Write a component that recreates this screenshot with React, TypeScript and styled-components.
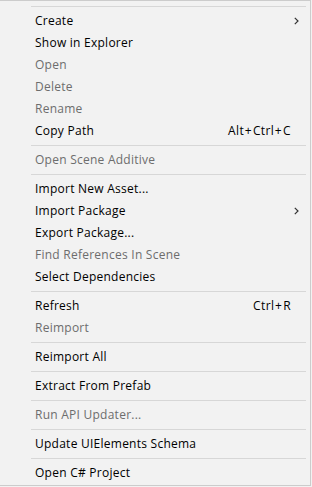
import React from "react";
import styled, { createGlobalStyle } from "styled-components";

const Global = createGlobalStyle`
  html, body { margin: 0; padding: 0; background: #f2f2f2; }
  body { font-family: "Open Sans", "Noto Sans", "Liberation Sans", sans-serif; }
`;

const Menu = styled.div`
  box-sizing: border-box;
  width: 311px;
  height: 486px;
  background: #f2f2f2;
  border-top: 1px solid #cccccc;
  border-right: 1px solid #cccccc;
  border-bottom: 1px solid #cccccc;
  padding-top: 2px;
  display: flex;
  flex-direction: column;
  font-family: "Open Sans", "Noto Sans", "Liberation Sans", sans-serif;
  font-size: 12px;
  letter-spacing: 0.25px;
  color: #000;
`;

const Row = styled.div<{ $disabled?: boolean }>`
  height: 22px;
  line-height: 22px;
  padding-left: 35px;
  padding-right: 19px;
  display: flex;
  align-items: center;
  color: ${(p) => (p.$disabled ? "#6d6d6d" : "#000000")};
  white-space: nowrap;
`;

const Label = styled.span`
  flex: 1;
`;

const Shortcut = styled.span`
  color: #000;
  display: flex;
  letter-spacing: 0.4px;
`;

const Plus = styled.span`
  margin: 0 1px 0 0.5px;
`;

const Arrow = styled.svg`
  width: 5px;
  height: 8px;
  margin-right: -8px;
`;

const Separator = styled.div`
  height: 7px;
  display: flex;
  align-items: center;
  padding-left: 31px;
  padding-right: 4px;
  &::after {
    content: "";
    flex: 1;
    height: 1px;
    background: #d7d7d7;
  }
`;

type Item =
  | { sep: true }
  | { label: string; disabled?: boolean; shortcut?: string[]; sub?: boolean };

const items: Item[] = [
  { sep: true },
  { label: "Create", sub: true },
  { label: "Show in Explorer" },
  { label: "Open", disabled: true },
  { label: "Delete", disabled: true },
  { label: "Rename", disabled: true },
  { label: "Copy Path", shortcut: ["Alt", "Ctrl", "C"] },
  { sep: true },
  { label: "Open Scene Additive", disabled: true },
  { sep: true },
  { label: "Import New Asset..." },
  { label: "Import Package", sub: true },
  { label: "Export Package..." },
  { label: "Find References In Scene", disabled: true },
  { label: "Select Dependencies" },
  { sep: true },
  { label: "Refresh", shortcut: ["Ctrl", "R"] },
  { label: "Reimport", disabled: true },
  { sep: true },
  { label: "Reimport All" },
  { sep: true },
  { label: "Extract From Prefab" },
  { sep: true },
  { label: "Run API Updater...", disabled: true },
  { sep: true },
  { label: "Update UIElements Schema" },
  { sep: true },
  { label: "Open C# Project" },
];

export default function App() {
  return (
    <>
      <Global />
      <Menu>
        {items.map((it, i) =>
          "sep" in it ? (
            <Separator key={i} />
          ) : (
            <Row key={i} $disabled={it.disabled}>
              <Label>{it.label}</Label>
              {it.shortcut && (
                <Shortcut>
                  {it.shortcut.map((k, j) => (
                    <React.Fragment key={j}>
                      {j > 0 && <Plus>+</Plus>}
                      {k}
                    </React.Fragment>
                  ))}
                </Shortcut>
              )}
              {it.sub && (
                <Arrow viewBox="0 0 5 8">
                  <path d="M0.8 0.8 L4 4 L0.8 7.2" fill="none" stroke="#333" strokeWidth="1.2" />
                </Arrow>
              )}
            </Row>
          )
        )}
      </Menu>
    </>
  );
}
